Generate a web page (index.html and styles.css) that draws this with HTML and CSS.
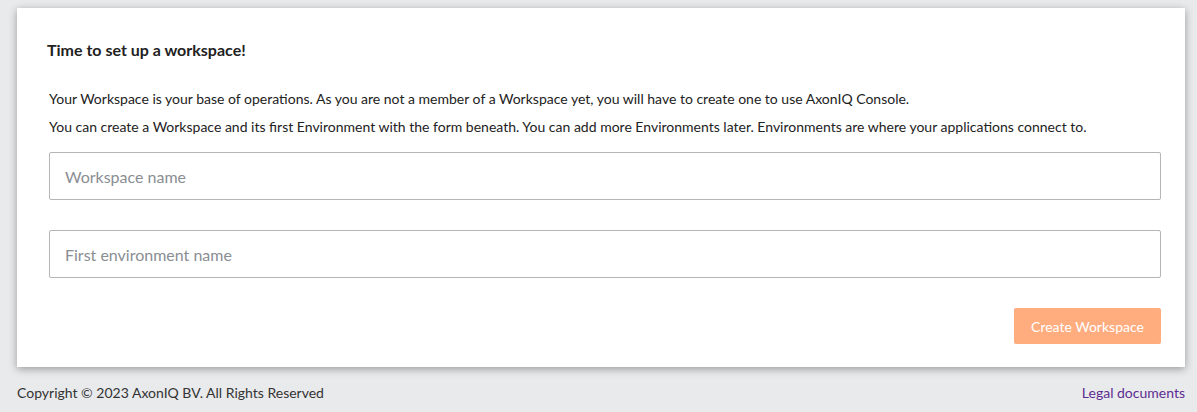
FILE: index.html
```html
<!DOCTYPE html>
<html>
<head>
<meta charset="utf-8">
<link rel="stylesheet" href="styles.css">
</head>
<body>
<div class="page">
  <div class="card">
    <h2 class="title">Time to set up a workspace!</h2>
    <p class="text first">Your Workspace is your base of operations. As you are not a member of a Workspace yet, you will have to create one to use AxonIQ Console.</p>
    <p class="text">You can create a Workspace and its first Environment with the form beneath. You can add more Environments later. Environments are where your applications connect to.</p>
    <form class="form">
      <input class="field" type="text" placeholder="Workspace name">
      <input class="field" type="text" placeholder="First environment name">
      <div class="actions">
        <button class="btn" type="button">Create Workspace</button>
      </div>
    </form>
  </div>
  <footer class="footer">
    <span class="copy">Copyright © 2023 AxonIQ BV. All Rights Reserved</span>
    <a class="legal" href="#">Legal documents</a>
  </footer>
</div>
</body>
</html>
```
FILE: styles.css
```css
* { box-sizing: border-box; }
html, body { margin: 0; padding: 0; }
body {
  background: #e9eaec;
  font-family: Lato, "Open Sans", sans-serif;
  color: #333;
}
.page {
  padding: 8px 12px 0 17px;
}
.card {
  background: #fff;
  box-shadow: 0 2px 8px rgba(0, 0, 0, 0.35);
  padding: 32px 24px 23px 32px;
}
.title {
  margin: 0 0 0 -2px;
  font-size: 16px;
  line-height: 20px;
  font-weight: 700;
  color: #222;
}
.text {
  margin: 8px 0 0;
  font-size: 14px;
  line-height: 20px;
  color: #222;
}
.text.first { margin-top: 29px; }
.form {
  margin-top: 15px;
  display: flex;
  flex-direction: column;
  gap: 30px;
}
.field {
  display: block;
  width: 100%;
  height: 48px;
  border: 1px solid #b5b5b5;
  border-radius: 2px;
  padding: 0 15px;
  font-family: Lato, sans-serif;
  font-size: 16px;
  color: #333;
  outline: none;
}
.field::placeholder { color: #8a8d93; }
.actions {
  display: flex;
  justify-content: flex-end;
}
.btn {
  background: #ffad7f;
  color: #fff;
  border: none;
  border-radius: 2px;
  height: 36px;
  width: 147px;
  font-family: Lato, sans-serif;
  font-size: 14px;
  cursor: pointer;
}
.footer {
  display: flex;
  justify-content: space-between;
  margin-top: 16px;
  font-size: 14px;
  line-height: 20px;
}
.copy { color: #333; }
.legal { color: #5c2d91; text-decoration: none; }
```
